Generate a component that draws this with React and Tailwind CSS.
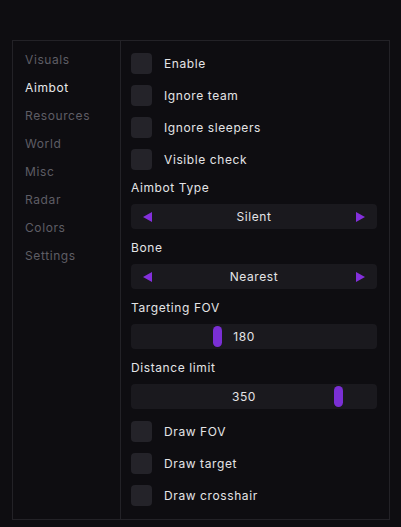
import React from "react";

const font = { fontFamily: "Inter, 'DejaVu Sans', sans-serif" };

function Check({ label }) {
  return (
    <div className="flex items-center h-[21px]">
      <div className="w-[21px] h-[21px] rounded-[4px] bg-[#242329]" />
      <span className="ml-[12px] text-[12px] text-[#e4e4e6] tracking-[0.6px]">{label}</span>
    </div>
  );
}

function Label({ text, className = "" }) {
  return (
    <div className={"h-[14px] flex items-center text-[12px] text-[#e4e4e6] tracking-[0.6px] " + className}>{text}</div>
  );
}

function Combo({ value }) {
  return (
    <div className="mt-[9px] h-[25px] rounded-[4px] bg-[#1a191e] flex items-center justify-between px-[11px]">
      <svg width="10" height="10" viewBox="0 0 10 10"><polygon points="10,0 10,10 1,5" fill="#8430dc" /></svg>
      <span className="text-[12px] text-[#e4e4e6] tracking-[0.6px]">{value}</span>
      <svg width="10" height="10" viewBox="0 0 10 10"><polygon points="0,0 0,10 9,5" fill="#8430dc" /></svg>
    </div>
  );
}

function Slider({ value, handle }) {
  return (
    <div className="relative mt-[9px] h-[25px] rounded-[4px] bg-[#1a191e] flex items-center justify-center pr-[20px]">
      <span className="text-[12px] text-[#e4e4e6] tracking-[0.6px]">{value}</span>
      <div className="absolute top-[2px] w-[9px] h-[21px] rounded-full bg-[#7a2fd4]" style={{ left: handle }} />
    </div>
  );
}

export default function App() {
  const nav = ["Visuals", "Aimbot", "Resources", "World", "Misc", "Radar", "Colors", "Settings"];
  return (
    <div className="w-[401px] h-[527px] bg-[#0e0d11] pt-[40px] pl-[12px]" style={font}>
      <div className="w-[378px] h-[480px] border border-[#232227] flex">
        <div className="w-[108px] border-r border-[#232227] pl-[12px] pt-[5px] flex flex-col">
          {nav.map((n) => (
            <div
              key={n}
              className={"h-[28px] flex items-center text-[12px] tracking-[0.6px] " + (n === "Aimbot" ? "text-[#e8e8ea]" : "text-[#5e5d65]")}
            >
              {n}
            </div>
          ))}
        </div>
        <div className="flex-1 pl-[10px] pr-[12px] pt-[12px] flex flex-col">
          <div className="flex flex-col gap-[11px]">
            <Check label="Enable" />
            <Check label="Ignore team" />
            <Check label="Ignore sleepers" />
            <Check label="Visible check" />
          </div>
          <Label text="Aimbot Type" className="mt-[11px]" />
          <Combo value="Silent" />
          <Label text="Bone" className="mt-[12px]" />
          <Combo value="Nearest" />
          <Label text="Targeting FOV" className="mt-[12px]" />
          <Slider value="180" handle="82px" />
          <Label text="Distance limit" className="mt-[12px]" />
          <Slider value="350" handle="203px" />
          <div className="mt-[12px] flex flex-col gap-[11px]">
            <Check label="Draw FOV" />
            <Check label="Draw target" />
            <Check label="Draw crosshair" />
          </div>
        </div>
      </div>
    </div>
  );
}
